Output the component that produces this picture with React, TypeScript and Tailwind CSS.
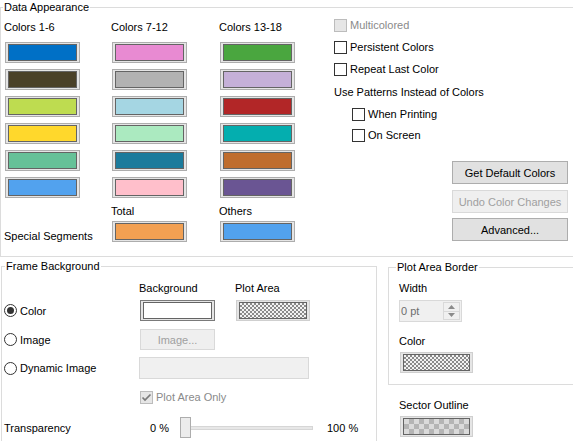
import React from 'react';

type SwatchProps = {
  color?: string;
  className?: string;
  outer?: string;
  pattern?: 'fine' | 'coarse';
};

const columns: { label: string; colors: string[]; extraLabel?: string; extra?: string }[] = [
  {
    label: 'Colors 1-6',
    colors: ['#0070c6', '#4a4128', '#bedc50', '#ffd82c', '#66c198', '#52a2ee'],
  },
  {
    label: 'Colors 7-12',
    colors: ['#e88ad2', '#b2b2b2', '#a5d6e3', '#abeac0', '#1b7b9c', '#ffbfcb'],
    extraLabel: 'Total',
    extra: '#f2a052',
  },
  {
    label: 'Colors 13-18',
    colors: ['#4aa63f', '#c5b0d8', '#b22627', '#04aeaf', '#bf6d2e', '#6a5593'],
    extraLabel: 'Others',
    extra: '#52a2ee',
  },
];

function Swatch({ color, className = 'w-[75px]', outer = 'border-[#adadad]', pattern }: SwatchProps) {
  const fill =
    pattern === 'fine'
      ? 'bg-[image:repeating-conic-gradient(#8a8a8a_0%_25%,#f2f2f2_0%_50%)] bg-[length:4px_4px]'
      : pattern === 'coarse'
        ? 'bg-[image:repeating-conic-gradient(#b4b4b4_0%_25%,#dadada_0%_50%)] bg-[length:10px_10px]'
        : '';
  return (
    <div className={`h-[21px] shrink-0 border ${outer} bg-[#e5e5e5] px-[2px] py-[1px] ${className}`}>
      <div
        className={`h-full w-full border border-[#646464] ${fill}`}
        style={color ? { backgroundColor: color } : undefined}
      />
    </div>
  );
}

function Check({ checked = false, disabled = false }: { checked?: boolean; disabled?: boolean }) {
  return (
    <span
      className={`flex h-[13px] w-[13px] shrink-0 items-center justify-center border ${
        disabled ? 'border-[#bcbcbc] bg-[#e6e6e6]' : 'border-[#333333] bg-white'
      }`}
    >
      {checked && (
        <svg width="11" height="11" viewBox="0 0 11 11">
          <path d="M1.5 5.5 L4 8 L9.5 2.5" fill="none" stroke="#7a7a7a" strokeWidth="1.7" />
        </svg>
      )}
    </span>
  );
}

function Radio({ checked = false }: { checked?: boolean }) {
  return (
    <span className="flex h-[13px] w-[13px] shrink-0 items-center justify-center rounded-full border border-[#333333] bg-white">
      {checked && <span className="h-[7px] w-[7px] rounded-full bg-[#333333]" />}
    </span>
  );
}

function CheckRow({
  label,
  disabled,
  className = '',
}: {
  label: string;
  disabled?: boolean;
  className?: string;
}) {
  return (
    <div className={`flex h-[14px] items-center gap-[3px] ${className}`}>
      <Check disabled={disabled} />
      <span className={disabled ? 'text-[#8a8a8a]' : ''}>{label}</span>
    </div>
  );
}

function Button({ label, disabled, className = '' }: { label: string; disabled?: boolean; className?: string }) {
  return (
    <button
      className={`flex h-[23px] w-[116px] items-center justify-center border ${
        disabled
          ? 'border-[#d9d9d9] bg-[#efefef] text-[#a0a0a0]'
          : 'border-[#adadad] bg-[#e1e1e1] text-black'
      } ${className}`}
    >
      {label}
    </button>
  );
}

export default function App() {
  return (
    <div className="h-[441px] w-[573px] overflow-hidden bg-white font-['Liberation_Sans',Arial,sans-serif] text-[11px] leading-[14px] text-black">
      {/* Data Appearance */}
      <fieldset className="h-[257px] w-[590px] border border-[#dcdcdc] p-0">
        <legend className="ml-[2px] px-[1px]">Data Appearance</legend>
        <div className="flex pl-[3px] pt-[6px]">
          {columns.map((col, i) => (
            <div key={col.label} className={`flex flex-col ${i === 0 ? 'w-[107px]' : i === 1 ? 'w-[108px]' : 'w-[76px]'}`}>
              <div className="mb-[8px] h-[14px]">{col.label}</div>
              <div className="ml-[1px] flex flex-col gap-[6px]">
                {col.colors.map((c, j) => (
                  <Swatch key={j} color={c} />
                ))}
              </div>
              {col.extraLabel ? (
                <>
                  <div className="mt-[6px] h-[14px]">{col.extraLabel}</div>
                  <div className="ml-[1px] mt-[3px]">
                    <Swatch color={col.extra} />
                  </div>
                </>
              ) : (
                <div className="mt-[32px] leading-[12px]">Special Segments</div>
              )}
            </div>
          ))}

          <div className="ml-[39px] mt-[-2px] flex w-[234px] flex-col">
            <CheckRow label="Multicolored" disabled />
            <CheckRow label="Persistent Colors" className="mt-[8px]" />
            <CheckRow label="Repeat Last Color" className="mt-[8px]" />
            <div className="mt-[9px] h-[14px]">Use Patterns Instead of Colors</div>
            <CheckRow label="When Printing" className="ml-[18px] mt-[8px]" />
            <CheckRow label="On Screen" className="ml-[18px] mt-[7px]" />
            <div className="mt-[19px] flex flex-col items-end">
              <Button label="Get Default Colors" />
              <Button label="Undo Color Changes" disabled className="mt-[6px]" />
              <Button label="Advanced..." className="mt-[5px]" />
            </div>
          </div>
        </div>
      </fieldset>

      <div className="mt-[2px] flex">
        {/* Frame Background */}
        <fieldset className="ml-[1px] h-[190px] w-[376px] shrink-0 border border-[#dcdcdc] p-0">
          <legend className="ml-[3px] px-[1px]">Frame Background</legend>
          <div className="flex flex-col pl-[2px] pt-[8px]">
            <div className="flex h-[14px]">
              <div className="w-[135px]" />
              <div className="w-[96px]">Background</div>
              <div>Plot Area</div>
            </div>

            <div className="mt-[5px] flex items-center">
              <div className="flex w-[135px] items-center gap-[3px]">
                <Radio checked />
                <span>Color</span>
              </div>
              <div className="w-[96px] pl-[1px]">
                <Swatch color="#ffffff" outer="border-[#7a7a7a]" />
              </div>
              <div className="pl-[1px]">
                <Swatch className="w-[74px]" outer="border-[#cfcfcf]" pattern="fine" />
              </div>
            </div>

            <div className="mt-[8px] flex items-center">
              <div className="flex w-[135px] items-center gap-[3px]">
                <Radio />
                <span>Image</span>
              </div>
              <div className="pl-[1px]">
                <button className="flex h-[21px] w-[75px] items-center justify-center border border-[#d9d9d9] bg-[#efefef] text-[#a0a0a0]">
                  Image...
                </button>
              </div>
            </div>

            <div className="mt-[7px] flex items-center">
              <div className="flex w-[135px] items-center gap-[3px]">
                <Radio />
                <span>Dynamic Image</span>
              </div>
              <div className="h-[22px] w-[170px] border border-[#d9d9d9] bg-[#f0f0f0]" />
            </div>

            <div className="mt-[11px] flex h-[14px] items-center">
              <div className="w-[136px]" />
              <div className="flex items-center gap-[3px]">
                <Check checked disabled />
                <span className="text-[#8a8a8a]">Plot Area Only</span>
              </div>
            </div>

            <div className="mt-[13px] flex h-[21px] items-center">
              <div className="w-[135px]">Transparency</div>
              <div className="flex items-center pl-[11px]">
                <span className="w-[30px]">0 %</span>
                <div className="relative h-[21px] w-[133px]">
                  <div className="mt-[9px] h-[4px] w-full border border-[#d6d6d6] bg-[#e7e7e7]" />
                  <div className="absolute left-0 top-0 h-[21px] w-[11px] border border-[#adadad] bg-[#ececec]" />
                </div>
                <span className="ml-[14px]">100 %</span>
              </div>
            </div>
          </div>
        </fieldset>

        <div className="ml-[11px] flex flex-col pt-[1px]">
          {/* Plot Area Border */}
          <fieldset className="h-[125px] w-[200px] border border-[#dcdcdc] p-0">
            <legend className="ml-[7px] px-[1px]">Plot Area Border</legend>
            <div className="flex flex-col pl-[10px] pt-[7px]">
              <div className="h-[14px]">Width</div>
              <div className="mt-[5px] flex h-[22px] w-[63px] border border-[#d9d9d9] bg-[#f0f0f0]">
                <div className="flex-1 pl-[1px] pt-[3px] text-[#6d6d6d]">0 pt</div>
                <div className="flex w-[18px] flex-col py-[1px] pr-[1px]">
                  <div className="flex h-[10px] items-center justify-center border border-[#d9d9d9] bg-[#f0f0f0]">
                    <svg width="7" height="4" viewBox="0 0 7 4">
                      <path d="M0 4 L3.5 0 L7 4 Z" fill="#8b8b8b" />
                    </svg>
                  </div>
                  <div className="mt-[-1px] flex h-[10px] items-center justify-center border border-[#d9d9d9] bg-[#f0f0f0]">
                    <svg width="7" height="4" viewBox="0 0 7 4">
                      <path d="M0 0 L7 0 L3.5 4 Z" fill="#8b8b8b" />
                    </svg>
                  </div>
                </div>
              </div>
              <div className="mt-[12px] h-[14px]">Color</div>
              <div className="ml-[1px] mt-[4px]">
                <Swatch className="w-[73px]" outer="border-[#cfcfcf]" pattern="fine" />
              </div>
            </div>
          </fieldset>

          {/* Sector Outline */}
          <div className="mt-[13px] flex flex-col pl-[11px]">
            <div className="h-[14px]">Sector Outline</div>
            <div className="ml-[1px] mt-[4px]">
              <Swatch className="w-[73px]" outer="border-[#cfcfcf]" pattern="coarse" />
            </div>
          </div>
        </div>
      </div>
    </div>
  );
}
